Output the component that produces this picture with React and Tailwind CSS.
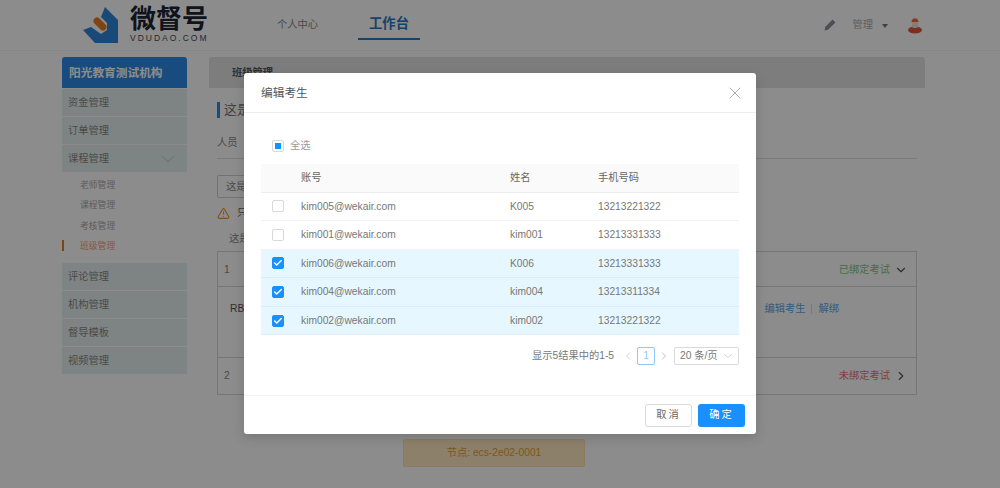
import React from 'react';
import { X, ChevronDown, ChevronRight, ChevronLeft, TriangleAlert, Check } from 'lucide-react';

const cjk = 'font-["Liberation_Sans","Noto_Sans_CJK_SC",sans-serif]';

const topMenus = ['资金管理', '订单管理'];
const subMenus = ['老师管理', '课程管理', '考核管理', '班级管理'];
const bottomMenus = ['评论管理', '机构管理', '督导模板', '视频管理'];

const students = [
  { account: 'kim005@wekair.com', name: 'K005', phone: '13213221322', checked: false },
  { account: 'kim001@wekair.com', name: 'kim001', phone: '13213331333', checked: false },
  { account: 'kim006@wekair.com', name: 'K006', phone: '13213331333', checked: true },
  { account: 'kim004@wekair.com', name: 'kim004', phone: '13213311334', checked: true },
  { account: 'kim002@wekair.com', name: 'kim002', phone: '13213221322', checked: true },
];

const Logo = () => (
  <svg width="37" height="37" viewBox="0 0 37 37" className="mt-[2px] shrink-0">
    <path d="M23 0 L36 13 L36 36 L13 36 L1 23 L9 20 L19 27 L25 23 L25 16 L19 10 Z" fill="#2e86d8" />
    <path d="M15 14 L21 20" stroke="#e67e22" strokeWidth="7" strokeLinecap="round" />
  </svg>
);

const Avatar = () => (
  <svg width="16" height="18" viewBox="0 0 16 18">
    <ellipse cx="8" cy="14" rx="7" ry="3.5" fill="#e2583e" />
    <rect x="5" y="5" width="6" height="7" rx="2" fill="#f3e3d8" />
    <path d="M4.5 6 C4.5 1 11.5 1 11.5 6 Z" fill="#f0702c" />
  </svg>
);

const Pen = () => (
  <svg width="12" height="12" viewBox="0 0 12 12">
    <path d="M8.6 .6 L11.4 3.4 L4 10.8 L.6 11.4 L1.2 8 Z" fill="#8a8f9a" />
  </svg>
);

const Header = () => (
  <div className="flex h-[51px] items-center border-b border-[#f2f2f2] bg-white">
    <div className="ml-[82px] mt-[-1px] flex w-[126px] items-center gap-[11px]">
      <Logo />
      <div className="flex flex-col items-start whitespace-nowrap">
        <span className="text-[26px] leading-[28px] font-bold text-[#1c2433]">微督号</span>
        <span className="text-[8.5px] leading-[11px] tracking-[2px] text-[#444b58]">VDUDAO.COM</span>
      </div>
    </div>
    <span className="ml-[69px] text-[10.25px] text-[#888]">个人中心</span>
    <div className="ml-[40px] flex h-[29px] w-[62px] justify-center border-b-2 border-[#2a7ac4] pt-[3px]">
      <span className="text-[13.3px] leading-[20px] font-bold text-[#2a78c0]">工作台</span>
    </div>
    <div className="ml-auto mr-[77px] flex items-center">
      <Pen />
      <span className="ml-[16px] text-[10.25px] text-[#aaa]">管理</span>
      <span className="ml-[9px] mt-[1px] h-0 w-0 border-x-[3.5px] border-t-[4px] border-x-transparent border-t-[#777]" />
      <span className="ml-[19px]"><Avatar /></span>
    </div>
  </div>
);

const MenuItem = ({ label, children }) => (
  <div className="flex h-[27px] items-center justify-between bg-[#e6f0f0] pl-[6px] pr-[11px] text-[10.25px] text-[#888]">
    {label}
    {children}
  </div>
);

const Sidebar = () => (
  <div className="flex w-[125px] shrink-0 flex-col">
    <div className="mb-px flex h-[31px] items-center rounded-t-[3px] bg-[#2e8be6] pl-[7px] text-[11.7px] font-bold text-white">
      阳光教育测试机构
    </div>
    <div className="flex flex-col gap-px">
      {topMenus.map((item) => <MenuItem key={item} label={item} />)}
      <MenuItem label="课程管理">
        <ChevronDown size={22} strokeWidth={0.7} className="mr-[-3px] text-[#aaa]" />
      </MenuItem>
    </div>
    <div className="mt-[3px] flex flex-col">
      {subMenus.map((item, i) => (
        <div key={item} className="flex h-[20.5px] items-center pl-[18px] text-[8.8px] text-[#aaa]">
          {i === 3 ? (
            <span className="relative text-[#f0a080]">
              <span className="absolute left-[-18px] top-0 h-[11px] w-[2px] bg-[#e67e22]" />
              {item}
            </span>
          ) : item}
        </div>
      ))}
    </div>
    <div className="mt-[6px] flex flex-col gap-px">
      {bottomMenus.map((item) => <MenuItem key={item} label={item} />)}
    </div>
  </div>
);

const Content = () => (
  <div className="ml-[22px] w-[716px] text-[10.25px] text-[#888]">
    <div className="flex h-[31px] items-center rounded-t-[3px] bg-[#e3e3e3] pl-[23px] text-[10.25px] font-bold text-[#555]">
      班级管理
    </div>
    <div className="ml-[8px] w-[700px]">
      <div className="mt-[14px] flex h-[16px] items-center border-l-[3px] border-[#2e8be6] pl-[4px] text-[13px] text-[#777]">这是班级</div>
      <div className="mt-[14px] flex h-[27px] items-center border-b border-[#e0e0e0] pb-[4px]">人员</div>
      <div className="mt-[16px] flex h-[23px] w-[200px] items-center rounded-[2px] border border-[#d0d0d0] pl-[8px]">这是</div>
      <div className="mt-[7px] flex h-[16px] items-center gap-[7px] text-[#666]">
        <TriangleAlert size={13} className="text-[#f0902e]" />
        只
      </div>
      <div className="mt-[10px] pl-[12px] leading-[16px]">这是</div>
      <div className="mt-[4px] border border-[#d8d8d8]">
        <div className="flex h-[35px] items-center justify-between border-b border-[#d8d8d8] pl-[6px] pr-[8px] pt-[1px]">
          1
          <span className="flex items-center gap-[4px] text-[#7fc77f]">
            已绑定考试
            <ChevronDown size={14} className="text-[#555]" />
          </span>
        </div>
        <div className="flex h-[71px] items-start justify-between border-b border-[#d8d8d8] pl-[12px] pr-[77px] pt-[14px] text-[#555]">
          RB
          <span className="flex items-center gap-[6px] text-[#5fa5e8]">
            编辑考生
            <span className="h-[10px] w-px bg-[#ddd]" />
            解绑
          </span>
        </div>
        <div className="flex h-[36px] items-center justify-between pl-[6px] pr-[8px]">
          2
          <span className="flex items-center gap-[4px] text-[#e87570]">
            未绑定考试
            <ChevronRight size={14} className="text-[#555]" />
          </span>
        </div>
      </div>
    </div>
  </div>
);

const Checkbox = ({ checked, partial }) => (
  <span className={`flex h-[12px] w-[12px] items-center justify-center rounded-[2px] border ${checked ? 'border-[#1890ff] bg-[#1890ff]' : 'border-[#d9d9d9] bg-white'}`}>
    {checked && <Check size={10} strokeWidth={3.5} className="text-white" />}
    {partial && <span className="h-[6px] w-[6px] bg-[#1890ff]" />}
  </span>
);

const Modal = () => (
  <div className="absolute left-[244px] top-[73px] z-10 h-[361px] w-[512px] rounded-[3px] bg-white text-[10.25px] text-[#777] shadow-[0_4px_12px_rgba(0,0,0,0.15)]">
    <div className="flex h-[40px] items-center justify-between border-b border-[#eeeeee] pl-[17px] pr-[11px]">
      <span className="text-[11.7px] text-[#555]">编辑考生</span>
      <X size={20} strokeWidth={0.8} className="text-[#888]" />
    </div>
    <div className="h-[282px] px-[17px] pt-[21px]">
      <div className="flex h-[24px] items-center gap-[6px] pl-[11px] text-[#999]">
        <Checkbox partial />
        全选
      </div>
      <div className="mt-[6px] grid h-[28.5px] grid-cols-[40px_209px_88px_1fr] items-center border-b border-[#eeeeee] bg-[#fafafa] text-[#666]">
        <span />
        <span>账号</span>
        <span>姓名</span>
        <span>手机号码</span>
      </div>
      {students.map((s) => (
        <div key={s.account} className={`grid h-[28.6px] grid-cols-[40px_209px_88px_1fr] items-center border-b ${s.checked ? 'border-[#d8eefc] bg-[#e6f7ff]' : 'border-[#f2f2f2]'}`}>
          <span className="pl-[11px]"><Checkbox checked={s.checked} /></span>
          <span>{s.account}</span>
          <span>{s.name}</span>
          <span>{s.phone}</span>
        </div>
      ))}
      <div className="mt-[11px] flex h-[19px] items-center justify-end">
        <span>显示5结果中的1-5</span>
        <ChevronLeft size={12} strokeWidth={1.5} className="ml-[8px] text-[#c4c4c4]" />
        <span className="ml-[3px] flex h-[18px] w-[18px] items-center justify-center rounded-[2px] border border-[#8cc8ff] text-[#8cc8ff]">1</span>
        <ChevronRight size={12} strokeWidth={1.5} className="ml-[3px] text-[#aaa]" />
        <span className="ml-[4px] flex h-[18px] w-[65px] items-center justify-between rounded-[2px] border border-[#d9d9d9] pl-[5px] pr-[3px]">
          20 条/页
          <ChevronDown size={14} strokeWidth={1} className="text-[#aaa]" />
        </span>
      </div>
    </div>
    <div className="flex h-[39px] items-center justify-end gap-[6px] border-t border-[#f2f2f2] pr-[11px]">
      <button className="h-[23px] w-[47px] rounded-[3px] border border-[#d9d9d9] bg-white tracking-[2px] text-[#666]">取消</button>
      <button className="h-[23px] w-[47px] rounded-[3px] bg-[#1890ff] tracking-[2px] text-white">确定</button>
    </div>
  </div>
);

const App = () => (
  <div className={`relative h-[488px] w-[1000px] overflow-hidden bg-white ${cjk}`}>
    <Header />
    <div className="ml-[62px] mt-[6px] flex">
      <Sidebar />
      <Content />
    </div>
    <div className="absolute left-[403px] top-[439px] flex h-[28px] w-[182px] items-center justify-center rounded-[2px] border border-[#fde0b0] bg-[#ffe9c1] text-[10.25px] text-[#e89c30]">
      节点: ecs-2e02-0001
    </div>
    <div className="absolute inset-0 bg-black/45" />
    <Modal />
  </div>
);

export default App;
